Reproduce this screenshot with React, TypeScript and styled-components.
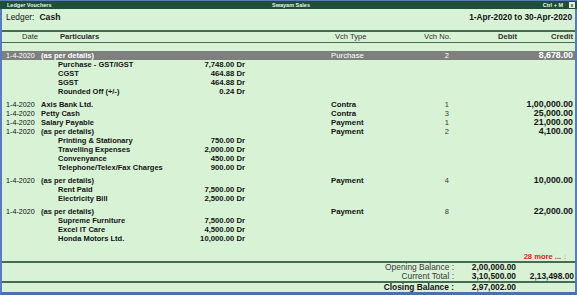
import React from "react";
import styled, { createGlobalStyle } from "styled-components";

const GlobalStyle = createGlobalStyle`
  html, body {
    margin: 0;
    padding: 0;
    background: #d7f2d4;
  }
  body {
    font-family: "Liberation Sans", Arial, sans-serif;
  }
`;

const COLS = "35px 290px 90px 30px 66px 56px";
const LINE = "#456b52";

const Window = styled.div`
  width: 577px;
  height: 295px;
  display: flex;
  flex-direction: column;
  overflow: hidden;
  background: #d7f2d4;
  color: #141414;
`;

const TitleBar = styled.div`
  height: 9px;
  display: grid;
  grid-template-columns: 1fr auto 1fr;
  align-items: center;
  padding: 0 2px 0 7px;
  background: #1f4e3b;
  border-top: 1px solid #5a7cb6;
  box-sizing: border-box;
  color: #e8f2ec;
  font-size: 5.5px;
  font-weight: bold;
  line-height: 8px;
`;

const TitleRight = styled.div`
  display: flex;
  justify-content: flex-end;
  align-items: center;
  gap: 6px;
`;

const CloseBox = styled.span`
  width: 6px;
  height: 6px;
  background: #e8ece8;
  color: #1f4e3b;
  font-size: 5px;
  line-height: 6px;
  text-align: center;
`;

const Body = styled.div`
  flex: 1;
  display: flex;
  flex-direction: column;
  border-left: 2px solid #5a7cb6;
  border-right: 2px solid #5a7cb6;
  border-bottom: 3px solid #4e6fab;
  min-height: 0;
`;

const InfoRow = styled.div`
  height: 21px;
  box-sizing: border-box;
  display: flex;
  justify-content: space-between;
  padding: 3px 3px 0 4px;
  line-height: 10px;
`;

const LedgerName = styled.div`
  font-size: 8.4px;
  b {
    margin-left: 5px;
    font-size: 8.6px;
  }
`;

const Period = styled.div`
  font-size: 8.3px;
  font-weight: bold;
`;

const ColHeader = styled.div`
  display: grid;
  grid-template-columns: ${COLS};
  padding: 0 2px 0 4px;
  height: 10px;
  line-height: 10px;
  border-top: 2px solid ${LINE};
  border-bottom: 1px solid ${LINE};
  font-size: 7.6px;
  color: #2e2e2e;
`;

const HeadCell = styled.div<{ $align?: "left" | "right"; $bold?: boolean; $pad?: number }>`
  text-align: ${(p) => p.$align || "left"};
  font-weight: ${(p) => (p.$bold ? "bold" : "normal")};
  padding-left: ${(p) => p.$pad || 0}px;
  white-space: nowrap;
`;

const List = styled.div`
  flex: 1;
  display: flex;
  flex-direction: column;
  padding-top: 8px;
  min-height: 0;
`;

const Voucher = styled.div<{ $spaced: boolean }>`
  margin-bottom: ${(p) => (p.$spaced ? 4 : 0)}px;
`;

const Row = styled.div<{ $active?: boolean }>`
  display: grid;
  grid-template-columns: ${COLS};
  padding: 0 2px 0 4px;
  height: 9px;
  line-height: 9px;
  font-size: 7.5px;
  white-space: nowrap;
  background: ${(p) => (p.$active ? "#7f7f7f" : "transparent")};
  color: ${(p) => (p.$active ? "#ffffff" : "#141414")};
`;

const DateCell = styled.div`
  font-size: 7.2px;
`;

const NameCell = styled.div`
  font-weight: bold;
`;

const TypeCell = styled.div<{ $active?: boolean }>`
  font-size: 7.8px;
  font-weight: ${(p) => (p.$active ? "normal" : "bold")};
`;

const NoCell = styled.div<{ $active?: boolean }>`
  text-align: right;
  color: ${(p) => (p.$active ? "#ffffff" : "#3a3a3a")};
  padding-right: 2px;
`;

const AmountCell = styled.div`
  text-align: right;
  font-weight: bold;
  font-size: 8.8px;
`;

const DetailRow = styled.div`
  display: grid;
  grid-template-columns: 125px 62px;
  padding-left: 56px;
  height: 9px;
  line-height: 9px;
  font-size: 7.5px;
  font-weight: bold;
  white-space: nowrap;
`;

const DetailAmount = styled.div`
  text-align: right;
  font-size: 7.7px;
`;

const More = styled.div`
  margin-top: auto;
  text-align: right;
  padding-right: 8px;
  height: 9px;
  line-height: 9px;
  font-size: 7.6px;
  font-weight: bold;
  color: #e0261f;
  span {
    color: #9aa6a0;
    font-weight: normal;
    margin-left: 2px;
  }
`;

const Footer = styled.div`
  border-top: 2px solid ${LINE};
`;

const TotalRow = styled.div<{ $closing?: boolean }>`
  display: grid;
  grid-template-columns: 1fr 60px 58px;
  padding-right: 1px;
  height: 9px;
  line-height: 9px;
  font-size: 8.4px;
  border-top: ${(p) => (p.$closing ? `2px solid ${LINE}` : "none")};
  font-weight: ${(p) => (p.$closing ? "bold" : "normal")};
`;

const TotalLabel = styled.div<{ $closing?: boolean }>`
  text-align: right;
  padding-right: 2px;
  color: ${(p) => (p.$closing ? "#141414" : "#3a3a3a")};
`;

const TotalValue = styled.div`
  text-align: right;
  font-weight: bold;
`;

type Detail = [string, string];

interface IVoucher {
  date: string;
  particulars: string;
  type: string;
  no: string;
  credit: string;
  active?: boolean;
  details?: Detail[];
}

const vouchers: IVoucher[] = [
  {
    date: "1-4-2020",
    particulars: "(as per details)",
    type: "Purchase",
    no: "2",
    credit: "8,678.00",
    active: true,
    details: [
      ["Purchase - GST/IGST", "7,748.00 Dr"],
      ["CGST", "464.88 Dr"],
      ["SGST", "464.88 Dr"],
      ["Rounded Off (+/-)", "0.24 Dr"],
    ],
  },
  { date: "1-4-2020", particulars: "Axis Bank Ltd.", type: "Contra", no: "1", credit: "1,00,000.00" },
  { date: "1-4-2020", particulars: "Petty Cash", type: "Contra", no: "3", credit: "25,000.00" },
  { date: "1-4-2020", particulars: "Salary Payable", type: "Payment", no: "1", credit: "21,000.00" },
  {
    date: "1-4-2020",
    particulars: "(as per details)",
    type: "Payment",
    no: "2",
    credit: "4,100.00",
    details: [
      ["Printing & Stationary", "750.00 Dr"],
      ["Travelling Expenses", "2,000.00 Dr"],
      ["Convenyance", "450.00 Dr"],
      ["Telephone/Telex/Fax Charges", "900.00 Dr"],
    ],
  },
  {
    date: "1-4-2020",
    particulars: "(as per details)",
    type: "Payment",
    no: "4",
    credit: "10,000.00",
    details: [
      ["Rent Paid", "7,500.00 Dr"],
      ["Electricity Bill", "2,500.00 Dr"],
    ],
  },
  {
    date: "1-4-2020",
    particulars: "(as per details)",
    type: "Payment",
    no: "8",
    credit: "22,000.00",
    details: [
      ["Supreme Furniture", "7,500.00 Dr"],
      ["Excel IT Care", "4,500.00 Dr"],
      ["Honda Motors Ltd.", "10,000.00 Dr"],
    ],
  },
];

const App = () => {
  return (
    <>
      <GlobalStyle />
      <Window>
        <TitleBar>
          <div>Ledger Vouchers</div>
          <div>Swayam Sales</div>
          <TitleRight>
            <span>Ctrl + M</span>
            <CloseBox>x</CloseBox>
          </TitleRight>
        </TitleBar>
        <Body>
          <InfoRow>
            <LedgerName>
              Ledger:<b>Cash</b>
            </LedgerName>
            <Period>1-Apr-2020 to 30-Apr-2020</Period>
          </InfoRow>
          <ColHeader>
            <HeadCell $pad={16}>Date</HeadCell>
            <HeadCell $bold $pad={19}>Particulars</HeadCell>
            <HeadCell $pad={4}>Vch Type</HeadCell>
            <HeadCell $align="right">Vch No.</HeadCell>
            <HeadCell $align="right" $bold>Debit</HeadCell>
            <HeadCell $align="right" $bold>Credit</HeadCell>
          </ColHeader>
          <List>
            {vouchers.map((v, i) => (
              <Voucher key={i} $spaced={!!v.details}>
                <Row $active={v.active}>
                  <DateCell>{v.date}</DateCell>
                  <NameCell>{v.particulars}</NameCell>
                  <TypeCell $active={v.active}>{v.type}</TypeCell>
                  <NoCell $active={v.active}>{v.no}</NoCell>
                  <div />
                  <AmountCell>{v.credit}</AmountCell>
                </Row>
                {v.details?.map(([name, amt]) => (
                  <DetailRow key={name}>
                    <div>{name}</div>
                    <DetailAmount>{amt}</DetailAmount>
                  </DetailRow>
                ))}
              </Voucher>
            ))}
            <More>
              28 more ...<span>↓</span>
            </More>
          </List>
          <Footer>
            <TotalRow>
              <TotalLabel>Opening Balance :</TotalLabel>
              <TotalValue>2,00,000.00</TotalValue>
              <div />
            </TotalRow>
            <TotalRow>
              <TotalLabel>Current Total :</TotalLabel>
              <TotalValue>3,10,500.00</TotalValue>
              <TotalValue>2,13,498.00</TotalValue>
            </TotalRow>
            <TotalRow $closing>
              <TotalLabel $closing>Closing Balance :</TotalLabel>
              <TotalValue>2,97,002.00</TotalValue>
              <div />
            </TotalRow>
          </Footer>
        </Body>
      </Window>
    </>
  );
};

export default App;
